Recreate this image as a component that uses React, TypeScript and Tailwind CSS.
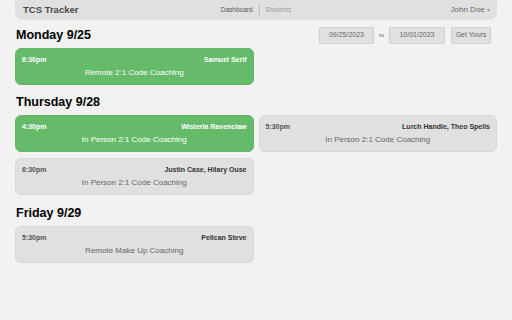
import React from "react";

interface Session {
  time: string;
  names: string;
  title: string;
  mine?: boolean;
}

interface Day {
  label: string;
  sessions: Session[];
}

const days: Day[] = [
  {
    label: "Monday 9/25",
    sessions: [{ time: "6:30pm", names: "Samuel Serif", title: "Remote 2:1 Code Coaching", mine: true }],
  },
  {
    label: "Thursday 9/28",
    sessions: [
      { time: "4:30pm", names: "Wisteria Ravenclaw", title: "In Person 2:1 Code Coaching", mine: true },
      { time: "5:30pm", names: "Lurch Handle, Theo Spells", title: "In Person 2:1 Code Coaching" },
      { time: "6:30pm", names: "Justin Case, Hilary Ouse", title: "In Person 2:1 Code Coaching" },
    ],
  },
  {
    label: "Friday 9/29",
    sessions: [{ time: "5:30pm", names: "Pelican Steve", title: "Remote Make Up Coaching" }],
  },
];

const sectionGap = ["mt-[7px]", "mt-[9px]", "mt-[10px]"];

function SessionCard({ s }: { s: Session }) {
  const base = s.mine
    ? "bg-[#66bb6a] border-[#5fb763] text-white"
    : "bg-[#e0e0e0] border-[#d7d7d7]";
  return (
    <div className={`rounded-[6px] border pl-[6px] pr-[6px] pt-[6px] pb-[6px] ${base}`}>
      <div className="flex justify-between text-[7px] font-bold leading-[9px]">
        <span className={s.mine ? "" : "text-[#555]"}>{s.time}</span>
        <span className={s.mine ? "" : "text-[#333]"}>{s.names}</span>
      </div>
      <div className={`mt-[3px] text-center text-[8px] leading-[11px] ${s.mine ? "" : "text-[#666]"}`}>
        {s.title}
      </div>
    </div>
  );
}

function DateRange() {
  return (
    <div className="flex items-center pr-[6px] text-[7px] text-[#666]">
      <div className="flex h-[17px] w-[55px] items-center justify-center rounded-[2px] border border-[#cfcfcf] bg-[#e0e0e0]">
        09/25/2023
      </div>
      <span className="mx-[5px] text-[6px]">to</span>
      <div className="flex h-[17px] w-[56px] items-center justify-center rounded-[2px] border border-[#cfcfcf] bg-[#e0e0e0]">
        10/01/2023
      </div>
      <div className="ml-[6px] flex h-[17px] w-[40px] items-center justify-center rounded-[2px] border border-[#cfcfcf] bg-[#e0e0e0]">
        Get Yours
      </div>
    </div>
  );
}

export default function App() {
  return (
    <div
      className="h-[320px] w-[512px] overflow-hidden bg-[#f2f2f2]"
      style={{ fontFamily: '"Liberation Sans", Arial, sans-serif' }}
    >
      <div className="mx-[15px]">
        {/* Navbar */}
        <div className="relative flex h-[20px] items-center justify-between rounded-b-[8px] bg-[#e0e0e0] pl-[8px] pr-[7px]">
          <span className="text-[9.5px] font-bold text-[#4a4a4a]">TCS Tracker</span>
          <div className="absolute left-1/2 top-0 flex h-[20px] -translate-x-1/2 items-center text-[6.5px]">
            <span className="text-[#555]">Dashboard</span>
            <span className="mx-[6px] h-[12px] w-px bg-[#bdbdbd]" />
            <span className="text-[#9a9a9a]">Students</span>
          </div>
          <span className="text-[8px] text-[#666]">
            John Doe <span className="text-[6px] text-[#999]">▾</span>
          </span>
        </div>

        {days.map((d, i) => (
          <div key={d.label} className={sectionGap[i]}>
            <div className="mb-[4px] flex h-[17px] items-center justify-between">
              <h2 className="pl-px text-[12.5px] font-bold leading-[17px] text-black">{d.label}</h2>
              {i === 0 && <DateRange />}
            </div>
            <div className="grid grid-cols-2 gap-x-[5px] gap-y-[6px]">
              {d.sessions.map((s, j) => (
                <SessionCard key={j} s={s} />
              ))}
            </div>
          </div>
        ))}
      </div>
    </div>
  );
}
